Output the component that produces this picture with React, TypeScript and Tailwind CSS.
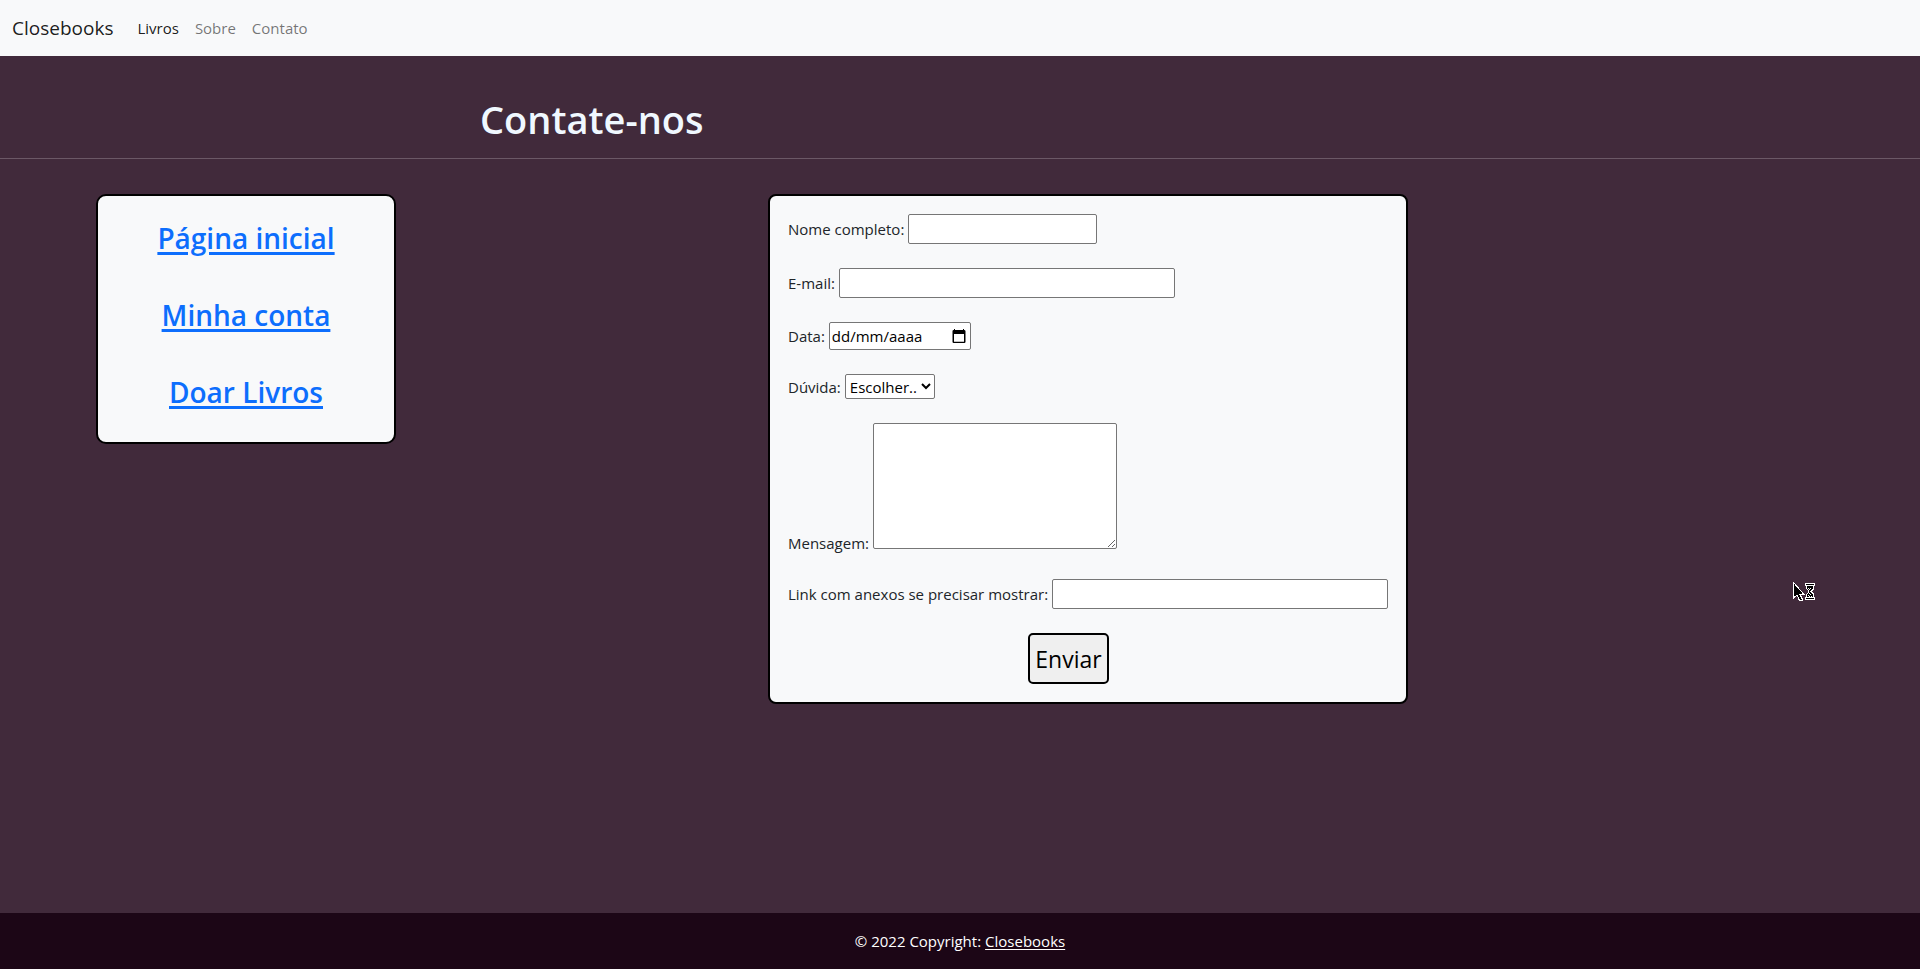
import type { ReactNode } from "react";

const sideLinks = ["Página inicial", "Minha conta", "Doar Livros"];

const control = "rounded-[2px] border border-[#767676] bg-white text-black";

function Row({ id, label, children }: { id: string; label: string; children: ReactNode }) {
  return (
    <div className="flex items-center gap-1">
      <label htmlFor={id} className="whitespace-nowrap">
        {label}
      </label>
      {children}
    </div>
  );
}

function CalendarIcon() {
  return (
    <svg viewBox="0 0 14 15" className="h-[15px] w-[14px]" aria-hidden="true">
      <path
        fill="#000"
        fillRule="evenodd"
        d="M2 0h1v1h8V0h1v1h.5A1.200 1.200 0 0 1 13.500 2.200v10.600A1.200 1.200 0 0 1 12.300 14H1.700A1.200 1.200 0 0 1 .5 12.800V2.200A1.200 1.200 0 0 1 1.700 1H2zM2 5v7.700h10V5z"
      />
    </svg>
  );
}

function BusyPointer() {
  return (
    <svg
      viewBox="0 0 23 20"
      className="pointer-events-none absolute top-[582px] left-[93.4%] h-[20px] w-[23px]"
      shapeRendering="crispEdges"
      aria-hidden="true"
    >
      <path
        d="M.5.5v15.500l3.500-3 2.500 5.500h2.500v-2l-2-4h4z"
        fill="#000"
        stroke="#fff"
        strokeWidth="1"
      />
      <path d="M12 1h10v3h-1v3l-2 2v1l2 2v3h1v3H12v-3h1v-3l2-2V9l-2-2V4h-1z" fill="#fff" />
      <path
        d="M13 2h8v1h-8zM14 4h6v3h-1v1h-1v3h1v1h1v3h-6v-3h1v-1h1V8h-1V7h-1zM13 16h8v1h-8z"
        fill="#000"
      />
      <path
        d="M15 6h1v1h-1zM17 6h1v1h-1zM16 7h1v1h-1zM17 9h1v1h-1zM16 11h1v1h-1zM17 12h1v1h-1zM15 13h1v1h-1zM16 14h1v1h-1zM18 14h1v1h-1z"
        fill="#fff"
      />
    </svg>
  );
}

export default function App() {
  return (
    <div className="relative flex min-h-screen flex-col bg-[#412a3b] font-['Segoe_UI','Open_Sans',sans-serif] text-[15px] leading-6 text-[#212529]">
      <nav className="flex h-14 items-center bg-[#f8f9fa] px-3">
        <a href="#" className="mr-6 text-[19px] text-black/90">
          Closebooks
        </a>
        <ul className="flex gap-4">
          <li>
            <a href="#livros" className="text-black/90">
              Livros
            </a>
          </li>
          <li>
            <a href="#sobre" className="text-black/55">
              Sobre
            </a>
          </li>
          <li>
            <a href="#contato" className="text-black/55">
              Contato
            </a>
          </li>
        </ul>
      </nav>

      <header className="border-b border-[#6b5866] pt-[38px] pb-[14px]">
        <h1 className="ml-[25%] text-[38px] leading-[50px] font-semibold text-[#f0f8ff]">Contate-nos</h1>
      </header>

      <main className="grid flex-1 grid-cols-[40%_1fr] items-start pt-[35px]">
        <aside className="ml-[12.5%] flex h-[250px] w-[300px] flex-col items-center gap-[37px] rounded-[10px] border-2 border-black bg-[#f8f9fa] pt-[22px]">
          {sideLinks.map((text) => (
            <a
              key={text}
              href="#"
              className="text-[28px] leading-10 font-semibold text-[#0d6efd] underline decoration-[3px] underline-offset-[3px]"
            >
              {text}
            </a>
          ))}
        </aside>

        <form
          className="flex w-[640px] flex-col gap-6 rounded-[8px] border-2 border-black bg-[#f8f9fa] p-[18px]"
          onSubmit={(e) => e.preventDefault()}
        >
          <Row id="nome" label="Nome completo:">
            <input id="nome" type="text" className={`${control} h-[30px] w-[189px] px-1`} />
          </Row>
          <Row id="email" label="E-mail:">
            <input id="email" type="email" className={`${control} h-[30px] w-[336px] px-1`} />
          </Row>
          <Row id="data" label="Data:">
            <div className={`${control} flex h-7 w-[142px] items-center pr-1 pl-[2px]`}>
              <input
                id="data"
                type="text"
                placeholder="dd/mm/aaaa"
                className="min-w-0 flex-1 placeholder:text-black"
              />
              <button type="button" aria-label="Abrir calendário">
                <CalendarIcon />
              </button>
            </div>
          </Row>
          <Row id="duvida" label="Dúvida:">
            <select id="duvida" className={`${control} h-[25px] w-[90px]`}>
              <option>Escolher..</option>
            </select>
          </Row>
          <div className="mb-[6px] flex items-end gap-1">
            <label htmlFor="mensagem" className="-mb-[6px]">
              Mensagem:
            </label>
            <textarea id="mensagem" className={`${control} h-[126px] w-[244px] px-1`} />
          </div>
          <Row id="anexos" label="Link com anexos se precisar mostrar:">
            <input id="anexos" type="text" className={`${control} h-[30px] w-[336px] px-1`} />
          </Row>
          <button
            type="submit"
            className="ml-[40%] h-[51px] w-[81px] rounded-[5px] border-2 border-black bg-[#efefef] text-[23px] text-black"
          >
            Enviar
          </button>
        </form>
      </main>

      <footer className="flex h-14 items-center justify-center gap-1 bg-[#1c0616] text-white">
        <span>© 2022 Copyright:</span>
        <a href="#" className="underline underline-offset-2">
          Closebooks
        </a>
      </footer>

      <BusyPointer />
    </div>
  );
}
